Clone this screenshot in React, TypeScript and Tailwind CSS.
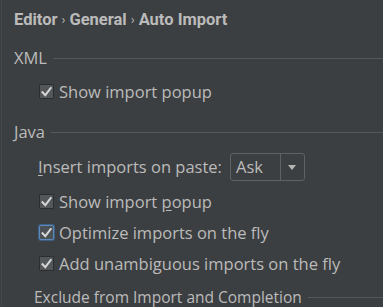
import { ReactNode } from "react";

const font = { fontFamily: '"Open Sans", "Noto Sans", sans-serif' };
const titleFont = { fontFamily: 'Roboto, "Open Sans", sans-serif' };

function Checkbox({ focused }: { focused?: boolean }) {
  return (
    <span
      className={
        focused
          ? "flex h-[15px] w-[15px] items-center justify-center rounded-[2px] border border-[#5d88bd] bg-[#4b5054] shadow-[0_0_0_1px_#3d6185]"
          : "flex h-[15px] w-[15px] items-center justify-center rounded-[1px] border border-[#2b2d2e] bg-[#53575a]"
      }
    >
      <svg width="11" height="10" viewBox="0 0 11 10">
        <path
          d="M1.5 5.2 L4.3 8.2 L9.8 1"
          fill="none"
          stroke="#d6d6d6"
          strokeWidth="2"
          strokeLinecap="square"
        />
      </svg>
    </span>
  );
}

function CheckRow({ children, focused }: { children: ReactNode; focused?: boolean }) {
  return (
    <div className="flex h-[31px] items-center pl-[37px]">
      <Checkbox focused={focused} />
      <span className="ml-[5px]">{children}</span>
    </div>
  );
}

function SectionTitle({ label, className = "pl-[12px]" }: { label: string; className?: string }) {
  return (
    <div className={`flex h-[20px] items-center ${className}`}>
      <span>{label}</span>
      <span className="ml-[6px] h-px flex-1 bg-[#55595b]" />
    </div>
  );
}

export default function App() {
  return (
    <div
      className="h-[307px] w-[383px] overflow-hidden bg-[#3c3f41] text-[16.5px] leading-[20px] text-[#bbbbbb]"
      style={font}
    >
      <div className="ml-px h-full border-l border-[#45494b]">
        <div className="flex h-[40px] items-center pl-[12px] text-[16.5px] font-bold" style={titleFont}>
          Editor <span className="mx-[4px] text-[13px] font-normal">›</span> General{" "}
          <span className="mx-[4px] text-[13px] font-normal">›</span> Auto Import
        </div>

        <div className="mt-[8px]">
          <SectionTitle label="XML" />
        </div>
        <div className="mt-[8px]">
          <CheckRow>Show import popup</CheckRow>
        </div>

        <div className="mt-[15px]">
          <SectionTitle label="Java" />
        </div>

        <div className="mt-[11px] flex h-[28px] items-center pl-[36px]">
          <span>
            <span className="underline underline-offset-2">I</span>nsert imports on paste:
          </span>
          <div className="ml-[8px] flex h-[28px] w-[75px] items-center rounded-[3px] border border-[#5e6264]">
            <span className="flex-1 pl-[5px]">Ask</span>
            <span className="flex h-full w-[24px] items-center justify-center border-l border-[#5e6264]">
              <svg width="8" height="5" viewBox="0 0 8 5">
                <path d="M0 0 H8 L4 5 Z" fill="#b5b5b5" />
              </svg>
            </span>
          </div>
        </div>

        <div className="mt-[5px]">
          <CheckRow>
            Show import <span className="underline underline-offset-2">p</span>opup
          </CheckRow>
          <CheckRow focused>Optimize imports on the fly</CheckRow>
          <CheckRow>Add unambiguous imports on the fly</CheckRow>
        </div>

        <div className="mt-[8px]">
          <SectionTitle label="Exclude from Import and Completion" className="pl-[32px] text-[15.5px]" />
        </div>
      </div>
    </div>
  );
}
